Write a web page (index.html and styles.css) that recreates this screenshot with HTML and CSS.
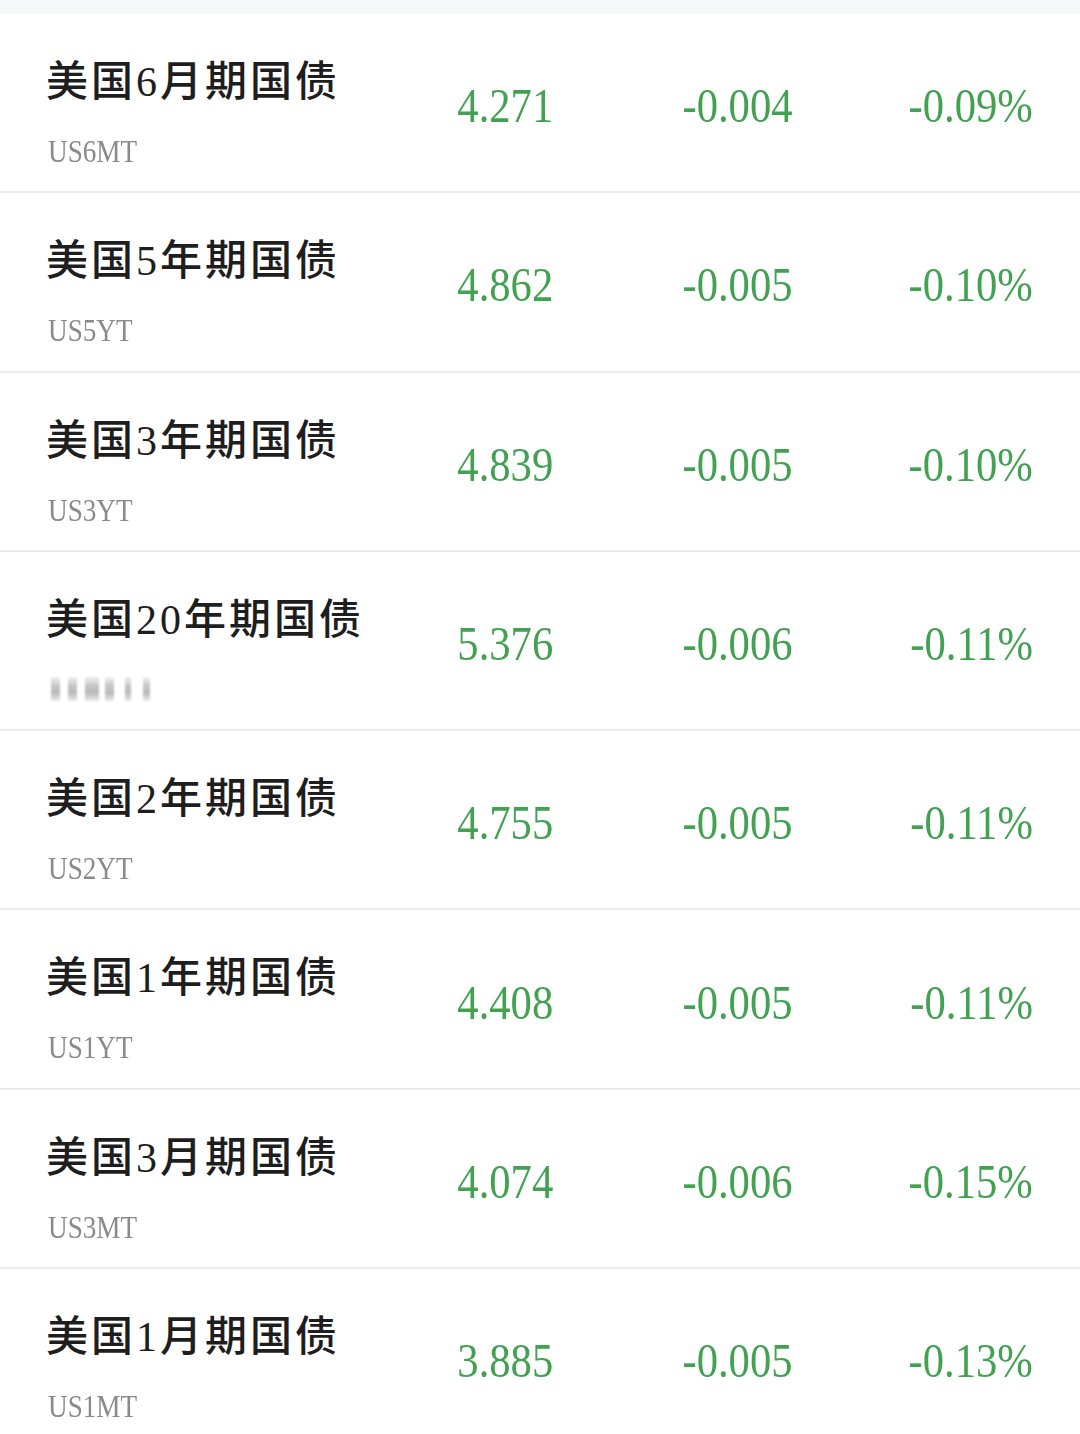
FILE: index.html
```html
<!DOCTYPE html>
<html>
    <head>
        <meta charset="utf-8">
        <title>美国国债收益率</title>
        <link rel="stylesheet" href="styles.css">
    </head>
    <body>
    <div class="topband"></div>
    <div class="list">
        <div class="row">
            <div class="name"><div class="title">美国6月期国债</div><div class="code"><span>US6MT</span></div></div>
            <div class="num"><span>4.271</span></div>
            <div class="num"><span>-0.004</span></div>
            <div class="num"><span>-0.09%</span></div>
        </div>
        <div class="row">
            <div class="name"><div class="title">美国5年期国债</div><div class="code"><span>US5YT</span></div></div>
            <div class="num"><span>4.862</span></div>
            <div class="num"><span>-0.005</span></div>
            <div class="num"><span>-0.10%</span></div>
        </div>
        <div class="row">
            <div class="name"><div class="title">美国3年期国债</div><div class="code"><span>US3YT</span></div></div>
            <div class="num"><span>4.839</span></div>
            <div class="num"><span>-0.005</span></div>
            <div class="num"><span>-0.10%</span></div>
        </div>
        <div class="row">
            <div class="name"><div class="title">美国20年期国债</div>
                <div class="code blurred"><i class="b1"></i><i class="b2"></i><i class="b3"></i><i class="b4"></i><i class="b5"></i><i class="b6"></i></div>
            </div>
            <div class="num"><span>5.376</span></div>
            <div class="num"><span>-0.006</span></div>
            <div class="num"><span>-0.11%</span></div>
        </div>
        <div class="row">
            <div class="name"><div class="title">美国2年期国债</div><div class="code"><span>US2YT</span></div></div>
            <div class="num"><span>4.755</span></div>
            <div class="num"><span>-0.005</span></div>
            <div class="num"><span>-0.11%</span></div>
        </div>
        <div class="row">
            <div class="name"><div class="title">美国1年期国债</div><div class="code"><span>US1YT</span></div></div>
            <div class="num"><span>4.408</span></div>
            <div class="num"><span>-0.005</span></div>
            <div class="num"><span>-0.11%</span></div>
        </div>
        <div class="row">
            <div class="name"><div class="title">美国3月期国债</div><div class="code"><span>US3MT</span></div></div>
            <div class="num"><span>4.074</span></div>
            <div class="num"><span>-0.006</span></div>
            <div class="num"><span>-0.15%</span></div>
        </div>
        <div class="row">
            <div class="name"><div class="title">美国1月期国债</div><div class="code"><span>US1MT</span></div></div>
            <div class="num"><span>3.885</span></div>
            <div class="num"><span>-0.005</span></div>
            <div class="num"><span>-0.13%</span></div>
        </div>
    </div>
    </body>
</html>
```
FILE: styles.css
```css
body{
    margin: 0;
    background: #fff;
    font-family: "Liberation Serif", "Noto Sans CJK SC", serif;
}
.topband{
    height: 14px;
    background: #f6f9fa;
}
.row{
    display: grid;
    grid-template-columns: 345px 162px 240px 240px;
    padding: 0 44px 0 46px;
    height: 179.3px;
    box-sizing: border-box;
    border-bottom: 2px solid #ebebeb;
}
.name{
    padding-top: 43px;
    white-space: nowrap;
}
.title{
    font-size: 42px;
    font-weight: 500;
    line-height: 50px;
    letter-spacing: 3px;
    color: #1e1e1e;
}
.code{
    margin-top: 26px;
    padding-left: 2px;
    font-size: 32px;
    line-height: 36px;
    height: 36px;
    color: #8a8a8a;
}
.code span{
    display: inline-block;
    transform: scaleX(.85);
    transform-origin: left center;
}
.blurred{
    display: flex;
    align-items: center;
    padding-left: 5px;
}
.blurred i{
    display: block;
    height: 24px;
    margin-right: 8px;
    background: linear-gradient(#f2f2f2, #c8c8c8 35%, #b8b8b8 65%, #ececec);
    filter: blur(1px);
}
.blurred .b1{ width: 9px; }
.blurred .b2{ width: 9px; }
.blurred .b3{ width: 14px; margin-right: 6px; }
.blurred .b4{ width: 9px; margin-right: 11px; }
.blurred .b5{ width: 6px; margin-right: 12px; }
.blurred .b6{ width: 7px; }
.num{
    align-self: center;
    margin-top: 6px;
    text-align: right;
    font-size: 49px;
    line-height: 49px;
    color: #43a152;
}
.num span{
    display: inline-block;
    transform: scaleX(.87);
    transform-origin: right center;
}
```
